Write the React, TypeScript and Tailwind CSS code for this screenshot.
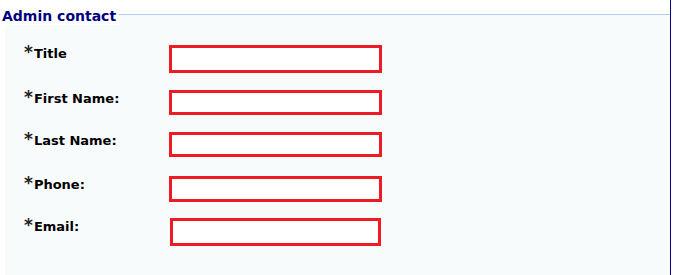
import React from 'react'

const fields = [
  { label: 'Title', h: 'h-[28px]', mt: 'mt-0', shift: '' },
  { label: 'First Name:', h: 'h-[25px]', mt: 'mt-[17px]', shift: '' },
  { label: 'Last Name:', h: 'h-[25px]', mt: 'mt-[17px]', shift: '' },
  { label: 'Phone:', h: 'h-[26px]', mt: 'mt-[19px]', shift: '' },
  { label: 'Email:', h: 'h-[28px]', mt: 'mt-[16px]', shift: 'ml-[1px] w-[211px]' },
]

export default function App() {
  return (
    <div className="w-[673px] h-[275px] bg-white font-['DejaVu_Sans',Verdana,sans-serif]">
      <div className="w-[671px] h-full border-r border-[#000099] flex flex-col">
        <div className="flex h-[25px]">
          <div className="pl-[2px] pr-[3px] pt-[8px] text-[14px] leading-[16px] font-bold text-[#000080]">
            Admin contact
          </div>
          <div className="flex-1 mt-[14px] border-t border-[#a9d0ee] bg-[#f8fbfb]" />
        </div>
        <div className="flex-1 ml-[5px] bg-[#f8fbfb] pt-[20px] flex flex-col">
          {fields.map((f) => (
            <div key={f.label} className={`flex ${f.mt}`}>
              <div className="w-[164px] pl-[19px] pt-[1px] text-[13px] leading-[16px] font-bold text-black flex items-start">
                <span className="text-[#222] text-[17px] leading-[13px] mr-[1px]">*</span>
                <span>{f.label}</span>
              </div>
              <input
                type="text"
                className={`${f.h} ${f.shift || 'w-[213px]'} border-[3px] border-[#ed1c24] bg-white outline-none`}
              />
            </div>
          ))}
        </div>
      </div>
    </div>
  )
}
